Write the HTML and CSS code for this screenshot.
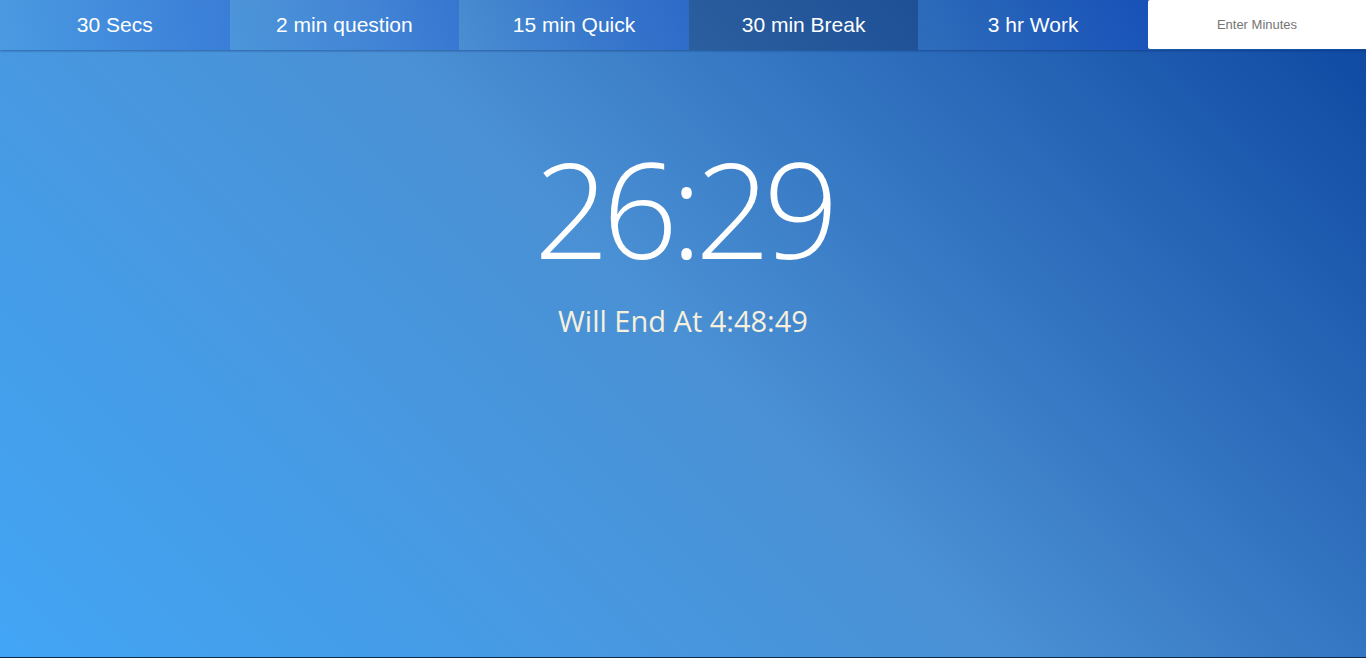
FILE: index.html
```html
<!DOCTYPE html>
<html lang="en">
<head>
<meta charset="utf-8">
<title>Timer</title>
<link rel="stylesheet" href="styles.css">
</head>
<body>
<div class="page">
  <nav class="bar">
    <button class="preset">30 Secs</button>
    <button class="preset">2 min question</button>
    <button class="preset">15 min Quick</button>
    <button class="preset active">30 min Break</button>
    <button class="preset">3 hr Work</button>
    <input class="minutes" type="text" placeholder="Enter Minutes">
  </nav>
  <main class="display">
    <div class="time">26:29</div>
    <div class="end">Will End At 4:48:49</div>
  </main>
  <div class="edge"></div>
</div>
</body>
</html>
```

FILE: styles.css
```css
html, body {
  margin: 0;
  padding: 0;
  height: 100%;
}
body {
  overflow: hidden;
}
.page {
  height: 658px;
  display: flex;
  flex-direction: column;
  background: linear-gradient(45deg, #42a5f5 0%, #4a90d4 50%, #0d47a1 100%);
}
.bar {
  display: flex;
  height: 50px;
  flex: 0 0 50px;
  box-shadow: 0 1px 2px rgba(10, 40, 100, 0.45);
  position: relative;
  z-index: 1;
}
.preset {
  flex: 0 0 229.6px;
  border: 0;
  margin: 0;
  padding: 0;
  height: 50px;
  color: #ffffff;
  font-family: "Liberation Sans", Arial, sans-serif;
  font-size: 21px;
  background: linear-gradient(to right, rgba(255, 255, 255, 0.02), rgba(20, 70, 215, 0.28));
  cursor: pointer;
}
.preset.active {
  background: linear-gradient(to right, rgba(10, 30, 70, 0.3), rgba(10, 30, 80, 0.32));
}
.minutes {
  flex: 1 1 auto;
  min-width: 0;
  height: 49px;
  border: 0;
  margin: 0;
  padding: 0;
  background: #ffffff;
  text-align: center;
  font-family: "Liberation Sans", Arial, sans-serif;
  font-size: 13px;
  color: #555;
  border-radius: 2px 0 0 2px;
}
.minutes::placeholder {
  color: #757575;
}
.display {
  flex: 1 1 auto;
  display: flex;
  flex-direction: column;
  align-items: center;
  padding-top: 73px;
}
.time {
  font-family: "Open Sans", "Noto Sans", sans-serif;
  font-weight: 300;
  font-size: 132px;
  line-height: 170px;
  color: #ffffff;
  letter-spacing: -7px;
}
.end {
  margin-top: 8px;
  font-family: "Open Sans", "Noto Sans", sans-serif;
  font-size: 29px;
  line-height: 40px;
  color: #f6f0dc;
}
.edge {
  height: 1px;
  flex: 0 0 1px;
  background: #0f2a44;
}
```
